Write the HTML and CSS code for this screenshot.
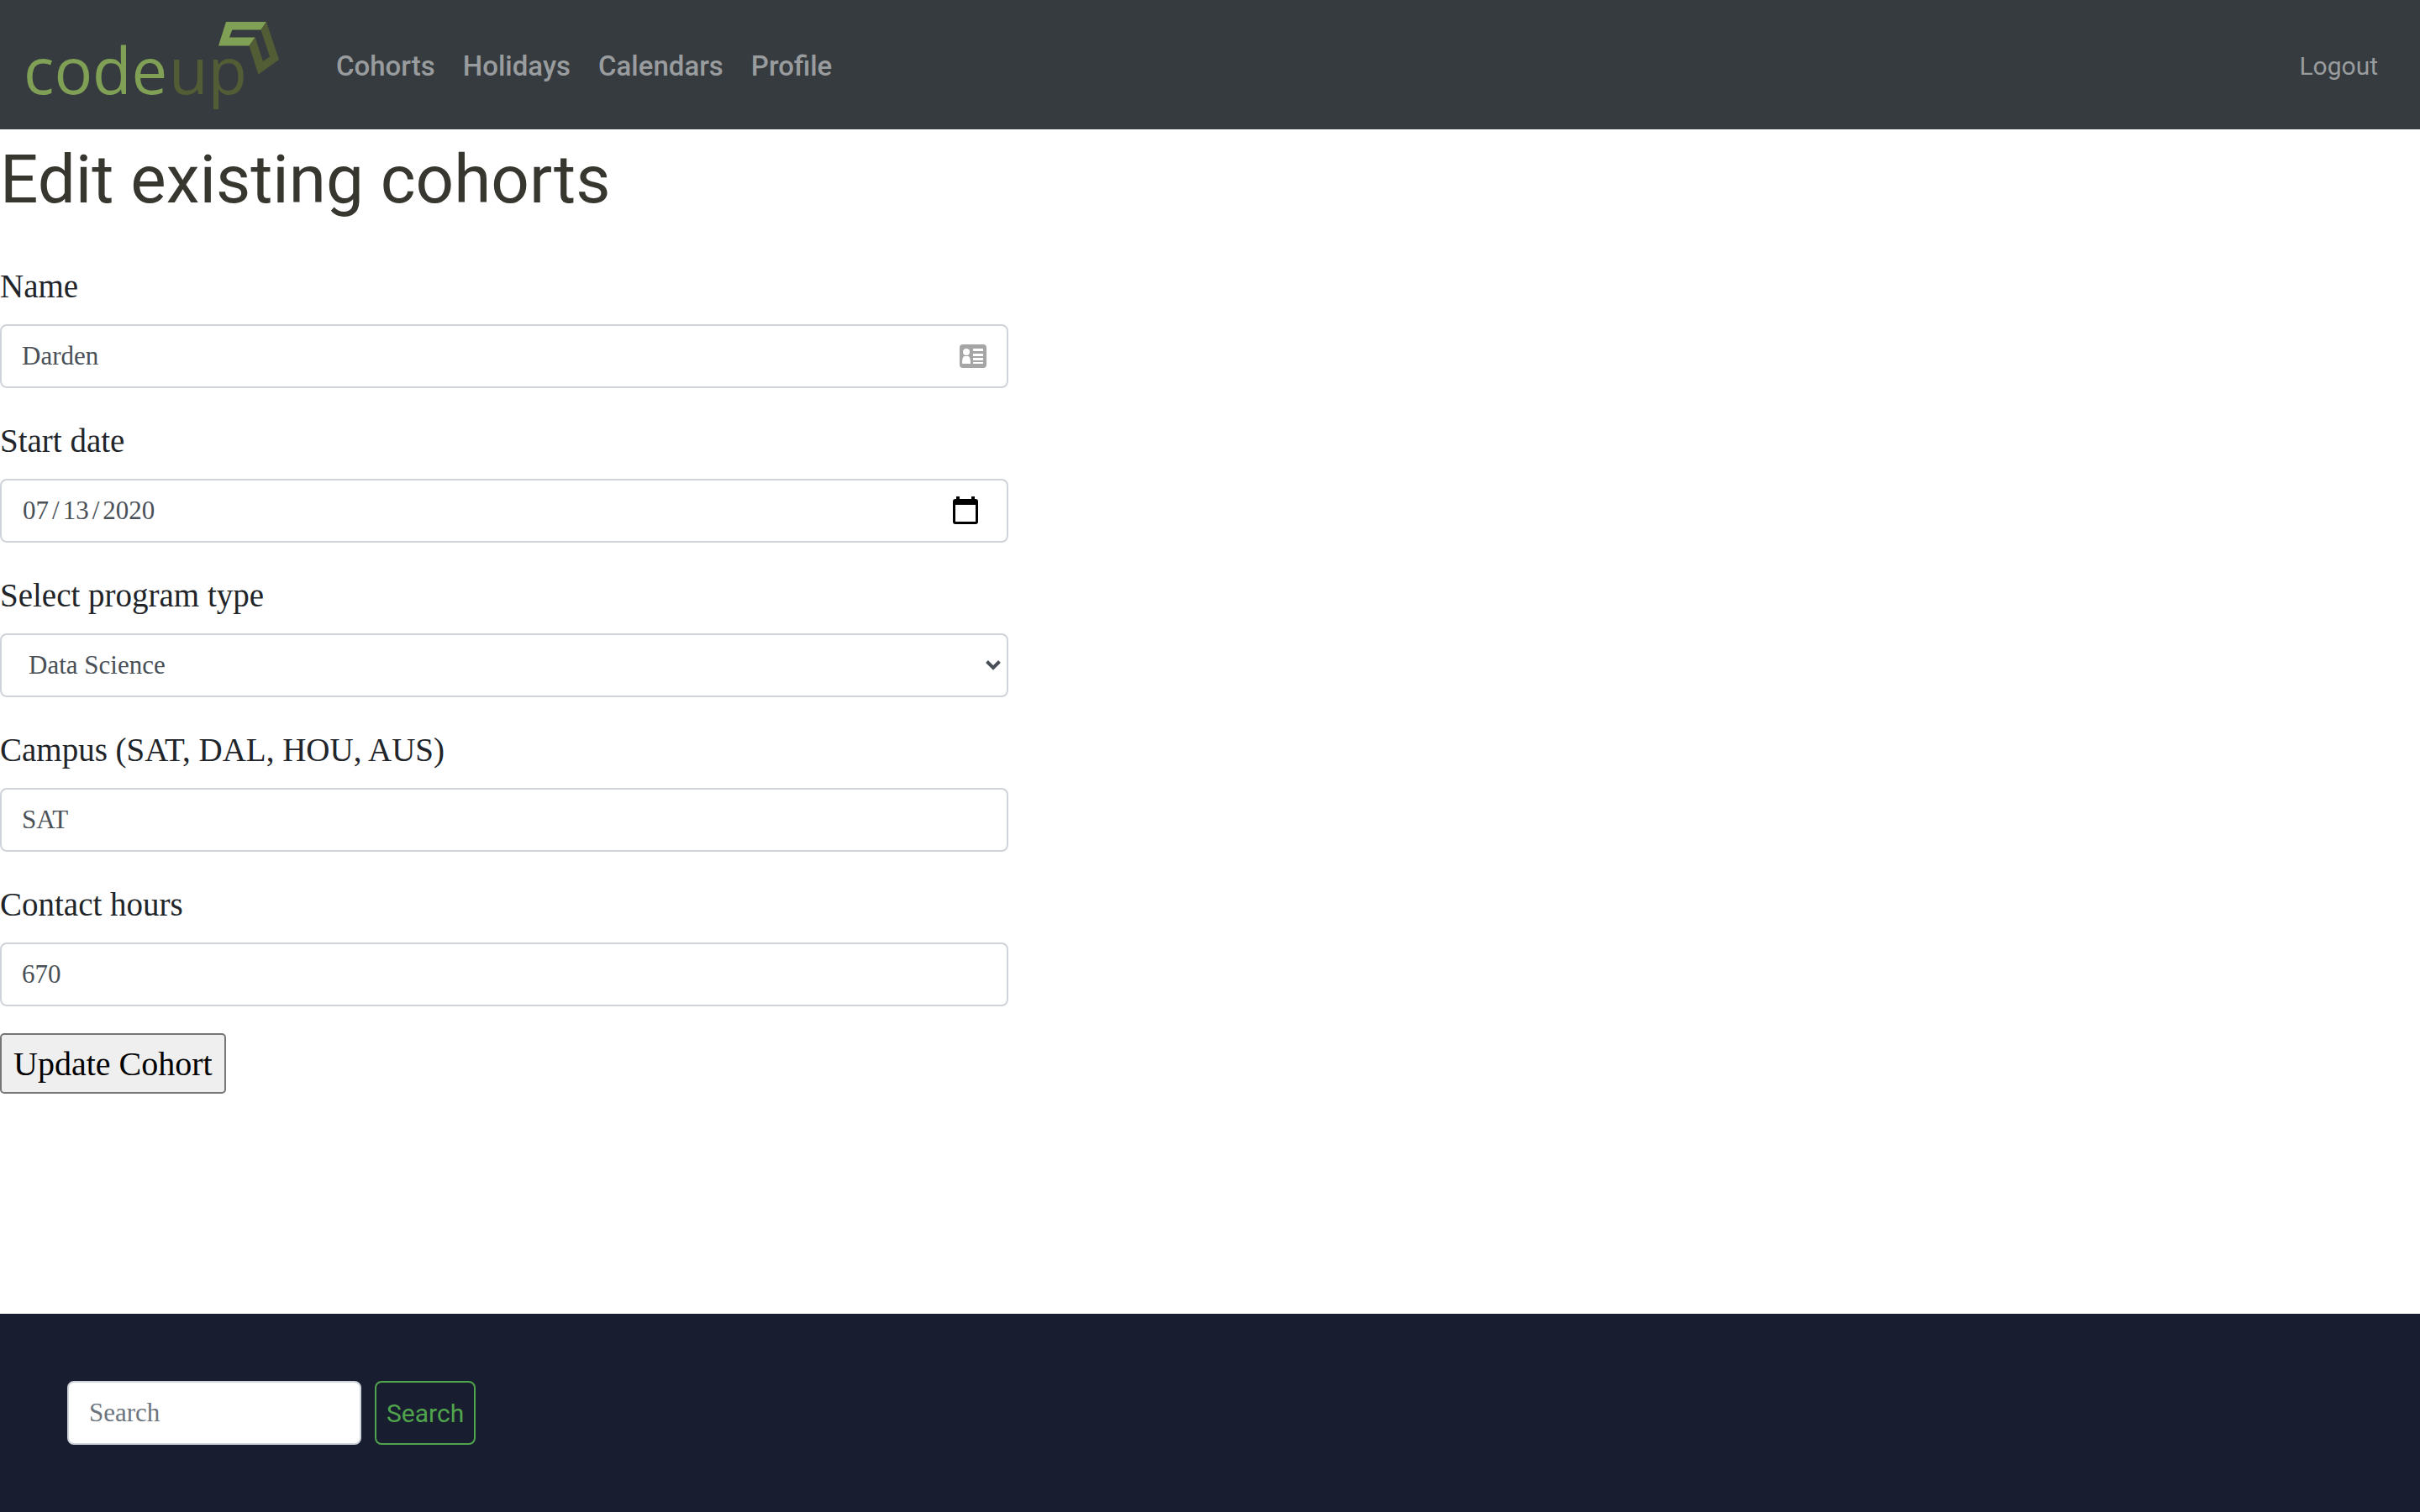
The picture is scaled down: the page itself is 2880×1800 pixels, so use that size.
FILE: index.html
```html
<!DOCTYPE html>
<html lang="en">
<head>
  <meta charset="utf-8">
  <title>Edit existing cohorts</title>
  <link rel="stylesheet" href="styles.css">
</head>
<body>
  <header class="navbar">
    <a class="brand" href="#" aria-label="codeup home">
      <svg class="logo" viewBox="0 0 300 102" width="300" height="102" aria-hidden="true">
        <text class="logo-code" x="-4" y="86">code</text>
        <text class="logo-up" x="169" y="86">up</text>
        <path class="logo-light" d="M237 0H285L278.500 9.500H244.300L241 18.500H271.700L264.500 28.500H228Z"/>
        <path class="logo-dark" d="M285 0L300 45L275.500 62.500L264.500 28.500L271.700 18.500L281 47L289 41.500L278.500 9.500Z"/>
      </svg>
    </a>
    <nav class="nav-links">
      <a href="#">Cohorts</a>
      <a href="#">Holidays</a>
      <a href="#">Calendars</a>
      <a href="#">Profile</a>
    </nav>
    <a class="logout" href="#">Logout</a>
  </header>

  <main class="content">
    <h1 class="title">Edit existing cohorts</h1>
    <form class="cohort-form">
      <div class="field">
        <label for="name">Name</label>
        <input class="control control-name" id="name" type="text" value="Darden">
      </div>
      <div class="field">
        <label for="start-date">Start date</label>
        <input class="control control-date" id="start-date" type="date" value="2020-07-13">
      </div>
      <div class="field">
        <label for="program">Select program type</label>
        <select class="control control-select" id="program">
          <option>Data Science</option>
          <option>Web Development</option>
        </select>
      </div>
      <div class="field">
        <label for="campus">Campus (SAT, DAL, HOU, AUS)</label>
        <input class="control" id="campus" type="text" value="SAT">
      </div>
      <div class="field">
        <label for="hours">Contact hours</label>
        <input class="control" id="hours" type="text" value="670">
      </div>
      <button class="submit" type="submit">Update Cohort</button>
    </form>
  </main>

  <footer class="footer">
    <form class="search">
      <input class="control search-input" type="search" placeholder="Search" aria-label="Search">
      <button class="search-button" type="submit">Search</button>
    </form>
  </footer>
</body>
</html>
```

FILE: styles.css
```css
*,
*::before,
*::after {
  box-sizing: border-box;
}

body {
  display: flex;
  flex-direction: column;
  min-height: 100vh;
  margin: 0;
  background: #fff;
  color: #212529;
  font-family: "Liberation Serif", serif;
  font-size: 39px;
  line-height: 62px;
}

/* Navigation bar */
.navbar {
  display: flex;
  align-items: center;
  padding: 26px 50px 26px 32px;
  background: #363b3f;
  font-family: Roboto, sans-serif;
}

.brand {
  display: flex;
  margin-right: 68px;
}

.logo {
  overflow: visible;
}

.logo text {
  font-family: "Open Sans", sans-serif;
  font-size: 76px;
  font-weight: 500;
}

.logo-code,
.logo-light {
  fill: #80a056;
}

.logo-up,
.logo-dark {
  fill: #525c35;
}

.nav-links {
  display: flex;
  gap: 33px;
}

.nav-links a,
.logout {
  padding-top: 4px;
  color: #999c9e;
  text-decoration: none;
}

.nav-links a {
  font-size: 33px;
  font-weight: 500;
}

.logout {
  margin-left: auto;
  font-size: 30px;
}

/* Cohort form */
.content {
  flex: 1;
}

.title {
  margin: 0 0 36px;
  color: #373730;
  font-family: Roboto, sans-serif;
  font-size: 80px;
  font-weight: 400;
  line-height: 120px;
}

.cohort-form {
  display: flex;
  flex-direction: column;
  align-items: flex-start;
  gap: 32px;
  width: calc(100% * 5 / 12);
}

.field {
  display: flex;
  flex-direction: column;
  gap: 14px;
  width: 100%;
}

.control {
  width: 100%;
  height: 76px;
  padding: 12px 24px;
  border: 2px solid #ced4da;
  border-radius: 8px;
  background-color: #fff;
  color: #495057;
  font-family: inherit;
  font-size: 31px;
  line-height: 48px;
}

.control::placeholder {
  color: #6c757d;
  opacity: 1;
}

.control-name {
  background-image: url("data:image/svg+xml,%3Csvg xmlns='http://www.w3.org/2000/svg' viewBox='0 0 32 28'%3E%3Crect width='32' height='28' rx='4' fill='%23a5a5a5'/%3E%3Cg fill='%23fff'%3E%3Ccircle cx='8' cy='9' r='4'/%3E%3Cpath d='M3 23c0-6 1-9 3-9h4c2 0 3 3 3 9zM16 5h12v3H16zM16 11h12v3H16zM16 16h12v3H16zM16 21h12v2H16z'/%3E%3C/g%3E%3C/svg%3E");
  background-position: right 24px center;
  background-repeat: no-repeat;
  background-size: 32px 28px;
}

.control-date {
  padding-right: 32px;
}

.control-date::-webkit-datetime-edit-text {
  padding: 0 3px;
}

.control-date::-webkit-calendar-picker-indicator {
  width: 34px;
  height: 34px;
  padding: 0;
  background-image: url("data:image/svg+xml,%3Csvg xmlns='http://www.w3.org/2000/svg' viewBox='0 0 34 34'%3E%3Cpath fill-rule='evenodd' d='M6 0h4v3h14V0h4v3h1q3 0 3 3v24q0 3-3 3H5q-3 0-3-3V6q0-3 3-3h1zM5 10v20h24V10z'/%3E%3C/svg%3E");
  background-size: 34px 34px;
}

.control-select {
  padding-left: 32px;
  appearance: none;
  background-image: url("data:image/svg+xml,%3Csvg xmlns='http://www.w3.org/2000/svg' viewBox='0 0 18 12'%3E%3Cpath d='M1.500 1.500L9 9L16.500 1.500' fill='none' stroke='%23495057' stroke-width='4'/%3E%3C/svg%3E");
  background-position: right 7px center;
  background-repeat: no-repeat;
  background-size: 18px 12px;
}

.submit {
  height: 72px;
  padding: 0 14px;
  border: 2px solid #767676;
  border-radius: 5px;
  background: #efefef;
  color: #000;
  font-family: inherit;
  font-size: 40px;
}

/* Footer */
.footer {
  padding: 80px;
  background: #191d30;
}

.search {
  display: flex;
  gap: 16px;
}

.search-input {
  width: 350px;
}

.search-button {
  height: 76px;
  padding: 0 12px;
  border: 2px solid #50a44b;
  border-radius: 8px;
  background: transparent;
  color: #50a44b;
  font-family: Roboto, sans-serif;
  font-size: 30px;
}
```
